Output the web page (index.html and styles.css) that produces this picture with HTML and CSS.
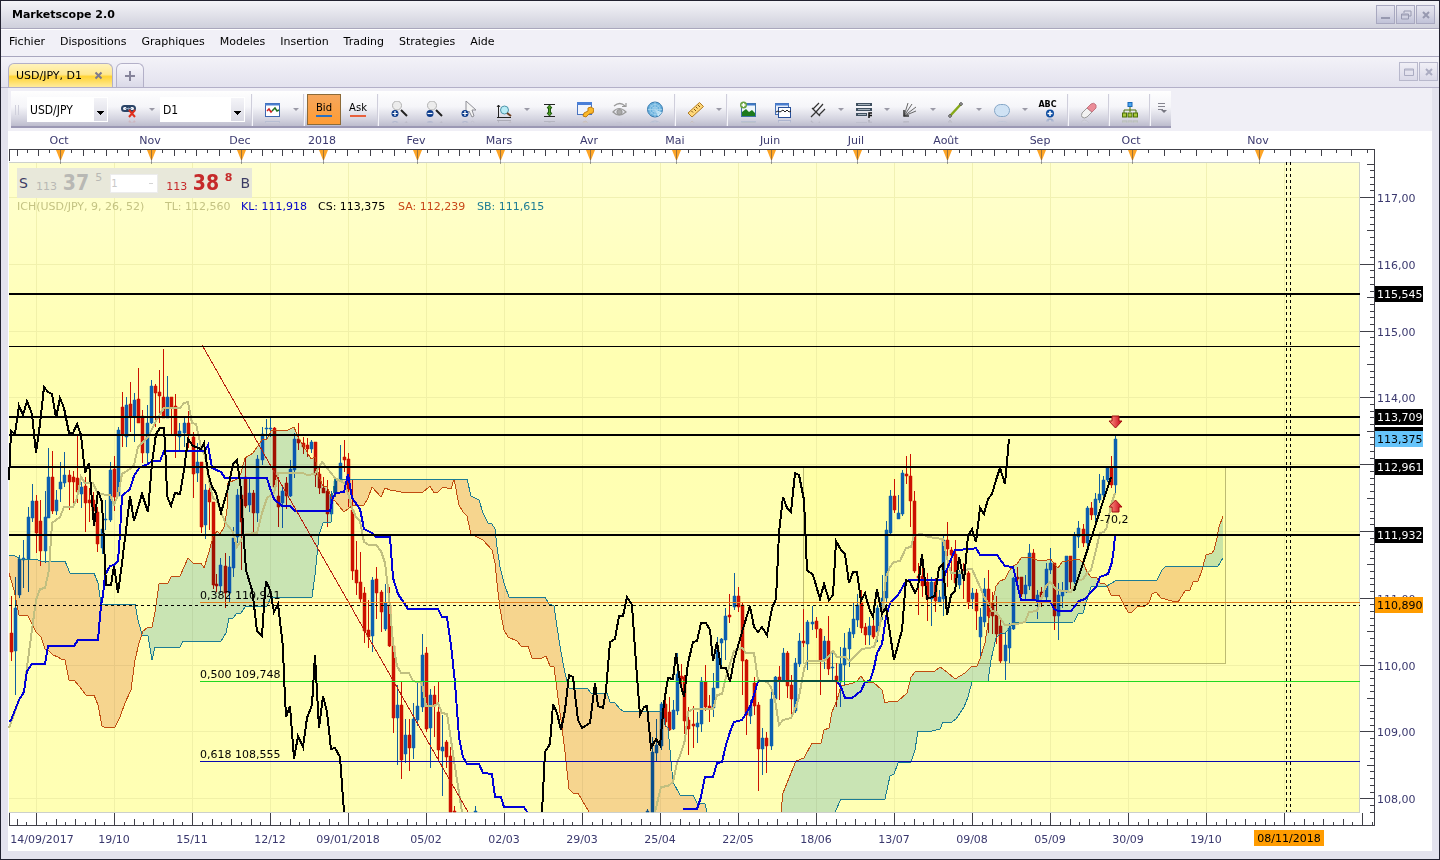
FILE: index.html
```html
<!DOCTYPE html>
<html lang="fr">
<head>
    <meta charset="UTF-8">
    <meta name="viewport" content="width=device-width, initial-scale=1.0">
    <title>Marketscope 2.0</title>
    <link rel="stylesheet" href="styles.css">
</head>
<body>
    <div class="window">
        <header class="titlebar">
            <h1>Marketscope 2.0</h1>
            <div class="window-buttons">
                <button aria-label="Minimize"><svg width="12" height="12"><path d="M1 9h9" stroke-width="2"/></svg></button>
                <button aria-label="Restore"><svg width="12" height="12"><path d="M4 4V2h7v5H9M1.500 5h7v5h-7zM1 6h8" /></svg></button>
                <button aria-label="Close"><svg width="12" height="12"><path d="M3 3l6 6M9 3l-6 6" stroke-width="2"/></svg></button>
            </div>
        </header>

        <nav class="menu">
            <button>Fichier</button>
            <button>Dispositions</button>
            <button>Graphiques</button>
            <button>Modeles</button>
            <button>Insertion</button>
            <button>Trading</button>
            <button>Strategies</button>
            <button>Aide</button>
        </nav>

        <div class="tabs">
            <button class="tab active">USD/JPY, D1 <svg width="9" height="9"><path d="M1.500 1.500l6 6M7.500 1.500l-6 6" stroke="#7d7a8c" stroke-width="2"/></svg></button>
            <button class="tab add" aria-label="New tab"><svg width="12" height="12"><path d="M6 1v10M1 6h10" stroke="#85839a" stroke-width="2"/></svg></button>
            <div class="window-buttons light">
                <button aria-label="Maximize"><svg width="12" height="12"><path d="M1.500 3h9v6.500h-9zM1 4h10"/></svg></button>
                <button aria-label="Close chart"><svg width="12" height="12"><path d="M3 3l6 6M9 3l-6 6" stroke-width="2"/></svg></button>
            </div>
        </div>

        <main class="workspace">
            <div class="toolbar-row">
                <div class="toolbar">
                    <span class="grip"></span>
                    <select class="symbol" aria-label="Symbol"><option>USD/JPY</option></select>
                    <button class="tool link" aria-label="Link">
                        <svg viewBox="0 0 18 18"><g fill="none" stroke="#2b4568" stroke-width="2"><rect x="2" y="5" width="8" height="5" rx="2.500"/><rect x="7" y="5" width="8" height="5" rx="2.500"/></g><path d="M5 7.500h7" stroke="#8fa4bf"/><path d="M9 9l6 7M15 9l-6 7" stroke="#e0301c" stroke-width="2"/></svg>
                    </button>
                    <button class="drop" aria-label="Link options"></button>
                    <select class="period" aria-label="Period"><option>D1</option></select>
                    <span class="sep"></span>
                    <button class="tool" aria-label="Chart type">
                        <svg viewBox="0 0 18 18"><rect x="1.500" y="2.500" width="14" height="13" fill="#fff" stroke="#3c66b0"/><path d="M1 3.500h15" stroke="#4a7fd0" stroke-width="2"/><path d="M3 10l2-2 2 3 1-1" fill="none" stroke="#d02020" stroke-width="1.500"/><path d="M8 10l3-3 2 3 2-1" fill="none" stroke="#207020" stroke-width="1.500"/></svg>
                    </button>
                    <button class="drop" aria-label="Chart types"></button>
                    <span class="sep"></span>
                    <button class="price bid">Bid</button>
                    <button class="price ask">Ask</button>
                    <span class="sep"></span>
                    <button class="tool" aria-label="Zoom in">
                        <svg viewBox="0 0 18 18"><circle cx="7" cy="4.500" r="4.500" fill="#ececec" stroke="#b0b0b0"/><path d="M11 9l6 6" stroke="#222" stroke-width="2"/><circle cx="5" cy="12.500" r="3.500" fill="#0d3c8c"/><path d="M5 10v5M2.500 12.500h5" stroke="#fff" stroke-width="1.200"/></svg>
                    </button>
                    <button class="tool" aria-label="Zoom out">
                        <svg viewBox="0 0 18 18"><circle cx="7" cy="4.500" r="4.500" fill="#ececec" stroke="#b0b0b0"/><path d="M11 9l6 6" stroke="#222" stroke-width="2"/><circle cx="5" cy="12.500" r="3.500" fill="#0d3c8c"/><path d="M2.500 12.500h5" stroke="#fff" stroke-width="1.200"/></svg>
                    </button>
                    <button class="tool" aria-label="Zoom pointer">
                        <svg viewBox="0 0 18 18"><path d="M6 0v13l3-3 3 6 2-1-2-6 4 0z" fill="#f4f4f4" stroke="#8e8e96"/><circle cx="5" cy="12.500" r="3.500" fill="#0d3c8c"/><path d="M5 10v5M2.500 12.500h5" stroke="#fff" stroke-width="1.200"/></svg>
                    </button>
                    <button class="tool" aria-label="Zoom area">
                        <svg viewBox="0 0 18 18"><path d="M3.500 4v12M2 16.500h14M2 6l1.500-2L5 6" fill="none" stroke="#222"/><circle cx="9.500" cy="9" r="4" fill="#b9ecf6" stroke="#4c93a8"/><path d="M12 12l4 3" stroke="#6e4020" stroke-width="2"/></svg>
                    </button>
                    <button class="drop" aria-label="Zoom options"></button>
                    <button class="tool" aria-label="Fit height">
                        <svg viewBox="0 0 18 18"><path d="M3 3.500h11M3 15.500h11" stroke="#222"/><path d="M8.500 4l2.500 3H9.500v5h1.500l-2.500 3L6 12h1.500V7H6z" fill="#4f9c20" stroke="#1c5a0c"/></svg>
                    </button>
                    <button class="tool" aria-label="Properties">
                        <svg viewBox="0 0 18 18"><rect x="1.500" y="1.500" width="14" height="12" fill="#f0f4fc" stroke="#4a74c0"/><path d="M1 2.500h15" stroke="#4a7fd8" stroke-width="3"/><path d="M7 15l1-3 4-2 0-3 3-1 3 2-1 4-4 1-3 3z" fill="#fbb829" stroke="#c07c10"/></svg>
                    </button>
                    <button class="tool" aria-label="View">
                        <svg viewBox="0 0 18 18" fill="none" stroke="#999" stroke-width="1.200"><path d="M2 11q6-7 13 0-7 6-13 0zM3 5q6-5 11 0M11 5.500h4V2"/><circle cx="8.500" cy="11" r="2.500" fill="#aaa"/></svg>
                    </button>
                    <button class="tool" aria-label="Globe">
                        <svg viewBox="0 0 18 18"><circle cx="9" cy="8.500" r="7.500" fill="#69b1de" stroke="#3578ad"/><path d="M9 8.500l7 3-4 4z" fill="#c9e8f8"/><g fill="none" stroke="#a9d4ee" stroke-width=".8"><circle cx="9" cy="8.500" r="5"/><circle cx="9" cy="8.500" r="2.500"/><path d="M9 1v15M2 8.500h14M4 3.500l10 10M14 3.500l-10 10"/></g></svg>
                    </button>
                    <span class="sep"></span>
                    <button class="tool" aria-label="Measure">
                        <svg viewBox="0 0 18 18"><path d="M1 12L12.500 1.500l4 4L5 16z" fill="#ffd87a" stroke="#b07a20"/><path d="M4.500 10l1.500 1.500M7 8l2 2M9 6l1.500 1.500M11 4l2 2" stroke="#7c5010"/></svg>
                    </button>
                    <button class="drop" aria-label="Measure options"></button>
                    <span class="sep"></span>
                    <button class="tool" aria-label="Add indicator">
                        <svg viewBox="0 0 18 18"><rect x="2.500" y="2.500" width="14" height="13" fill="#eef6fc" stroke="#3f72a6"/><path d="M3 3.500h13" stroke="#3f78c8" stroke-width="2"/><path d="M3 15v-4l4-3 3 3 3-2 3 3v3z" fill="#1c7a1c"/><circle cx="4.500" cy="4" r="3.500" fill="#69a342"/><path d="M4.500 2v4M2.500 4h4" stroke="#fff" stroke-width="1.500"/></svg>
                    </button>
                    <button class="tool" aria-label="Indicators">
                        <svg viewBox="0 0 18 18"><rect x="1.500" y="2.500" width="13" height="11" fill="#e8effb" stroke="#456fb4"/><path d="M1 3.500h14" stroke="#4a7fd0" stroke-width="2"/><rect x="4.500" y="6.500" width="12" height="10" fill="#fff" stroke="#28509a"/><path d="M2 11l2-1 2 1 3-2 2 2 2-2 2 2 2-1" fill="none" stroke="#222"/></svg>
                    </button>
                    <button class="tool" aria-label="Pitchfork">
                        <svg viewBox="0 0 18 18" fill="none" stroke="#333" stroke-width="1.200"><path d="M2 16l5-5M3 7l8 8M4 8l6-6M7 11l7-8M10 14l6-6"/></svg>
                    </button>
                    <button class="drop" aria-label="Pitchfork options"></button>
                    <button class="tool" aria-label="Fibonacci">
                        <svg viewBox="0 0 18 18"><path d="M1 3.500h16M1 8.500h16M1 13.500h11" stroke="#405060" stroke-width="3"/><path d="M3 3.500h12M3 8.500h12M3 13.500h8" stroke="#a4b0ba"/><path d="M14 17v-5h3M14 14.500h3" fill="none" stroke="#111" stroke-width="1.500"/></svg>
                    </button>
                    <button class="drop" aria-label="Fibonacci options"></button>
                    <button class="tool" aria-label="Fan">
                        <svg viewBox="0 0 18 18" fill="none" stroke="#666"><path d="M3 15L7 2M3 15l8-12M3 15L15 6M3 15l12-5"/><path d="M3 9v6h5" stroke="#333" stroke-width="1.500"/></svg>
                    </button>
                    <button class="drop" aria-label="Fan options"></button>
                    <button class="tool" aria-label="Line">
                        <svg viewBox="0 0 18 18"><path d="M3 15L14 3" stroke="#85a818" stroke-width="2.500"/><circle cx="3" cy="15" r="1.300" fill="#ddd" stroke="#444"/><circle cx="14" cy="3" r="1.300" fill="#ddd" stroke="#444"/></svg>
                    </button>
                    <button class="drop" aria-label="Line options"></button>
                    <button class="tool" aria-label="Shape">
                        <svg viewBox="0 0 18 18"><rect x="1.500" y="3.500" width="15" height="12" rx="6" fill="#cfe2f4" stroke="#85a6c6"/></svg>
                    </button>
                    <button class="drop" aria-label="Shape options"></button>
                    <button class="tool abc" aria-label="Text label"><span>ABC</span>
                        <svg viewBox="0 0 18 9"><circle cx="11" cy="4.500" r="4" fill="#0d4ca0"/><path d="M11 2v5M8.500 4.500h5" stroke="#fff" stroke-width="1.500"/></svg>
                    </button>
                    <span class="sep"></span>
                    <button class="tool" aria-label="Eraser">
                        <svg viewBox="0 0 18 18"><path d="M2 12l5-5 5 4-5 5q-3 2-5 0-1-1 0-4z" fill="#f2f2f2" stroke="#9a9a9a"/><path d="M7 7l4-4q3-2 5 1l0 3-4 4z" fill="#ec8c98" stroke="#c27480"/></svg>
                    </button>
                    <span class="sep"></span>
                    <button class="tool" aria-label="Tree">
                        <svg viewBox="0 0 18 18"><path d="M9 5v6M3 12V9h12v3" fill="none" stroke="#4c7008"/><rect x="7" y="1.500" width="4" height="4" fill="#4aa4f0" stroke="#1868b8"/><g fill="#a8c83c" stroke="#4c7008"><rect x="1.500" y="12" width="4" height="4"/><rect x="7" y="12" width="4" height="4"/><rect x="12.500" y="12" width="4" height="4"/></g></svg>
                    </button>
                    <span class="sep"></span>
                    <button class="overflow" aria-label="More tools"><svg width="10" height="12"><path d="M1 1.500h7M1 4.500h7M1 7.500h5" stroke="#85858f"/><path d="M4 8h6l-3 3z" fill="#777781"/></svg></button>
                </div>
            </div>

            <section class="chart">
                <svg id="chart" viewBox="8 131 1424 720" role="img" aria-label="USD/JPY D1"></svg>
                <div class="dealing">
                    <button class="side">S</button>
                    <span class="sell"><small>113</small><b>37</b><sup>5</sup></span>
                    <select aria-label="Amount"><option>1</option></select>
                    <span class="buy"><small>113</small><b>38</b><sup>8</sup></span>
                    <button class="side">B</button>
                </div>
            </section>
        </main>
    </div>

    <script src="chart.js"></script>
</body>
</html>
```

FILE: styles.css
```css
* {
    box-sizing: border-box;
}

body {
    margin: 0;
    height: 100vh;
    font-family: "DejaVu Sans", Verdana, sans-serif;
    font-size: 11px;
    color: #000;
}

button,
select {
    font: inherit;
    color: inherit;
    border: none;
    background: none;
    padding: 0;
    margin: 0;
}

.window {
    display: flex;
    flex-direction: column;
    height: 100%;
    border: 1px solid #222230;
    background: #e4e3ee;
}

.titlebar {
    display: flex;
    align-items: center;
    justify-content: space-between;
    height: 28px;
    padding: 0 4px 0 11px;
    background: linear-gradient(#f4f4f8, #e2e2ea 50%, #cfd0dc);
    border-bottom: 1px solid #a9a7bc;
}

.titlebar h1 {
    margin: 0;
    font-size: 11px;
    font-weight: bold;
}

.window-buttons {
    display: flex;
    gap: 1px;
}

.window-buttons button {
    width: 19px;
    height: 19px;
    border: 1px solid #a8a8c0;
    background: linear-gradient(#e6e6f0, #d6d6e4 50%, #c0c2d8);
    display: flex;
    align-items: center;
    justify-content: center;
}

.window-buttons svg {
    fill: none;
    stroke: #9799b0;
}

.window-buttons.light {
    margin-left: auto;
    margin-bottom: 6px;
}

.window-buttons.light button {
    background: linear-gradient(#f0eff6, #dad9e8);
    border-color: #b8b8cc;
}

.window-buttons.light svg {
    stroke: #abacc2;
}

.menu {
    display: flex;
    align-items: center;
    gap: 15px;
    height: 28px;
    padding: 0 8px 3px;
    background: #f1f0f7;
    border-top: 1px solid #fff;
    border-bottom: 1px solid #a9a7bf;
}

.tabs {
    display: flex;
    align-items: flex-end;
    gap: 3px;
    height: 31px;
    padding: 0 1px 0 7px;
    background: linear-gradient(#f3f2f8, #e3e2ee);
    border-bottom: 1px solid #b3b0c8;
}

.tab {
    display: flex;
    align-items: center;
    height: 24px;
    border: 1px solid #b3b0c8;
    border-bottom: none;
    border-radius: 6px 6px 0 0;
    background: linear-gradient(#f7f6fb, #dad9e8);
}

.tab.active {
    gap: 12px;
    padding: 0 9px 0 7px;
    background: linear-gradient(#fff3bc, #ffe88f 45%, #ffd334 55%, #ffeb9c);
}

.tab.add {
    width: 28px;
    justify-content: center;
}

.workspace {
    flex: 1;
    display: flex;
    flex-direction: column;
    min-height: 0;
    padding: 0 7px 8px;
}

.toolbar-row {
    height: 43px;
    padding: 3px;
    background: #f0eff6;
}

.toolbar {
    display: inline-flex;
    align-items: center;
    height: 37px;
    padding-top: 2px;
    background: linear-gradient(#fefefe, #f5f5f9 45%, #d4d4e0 80%, #bdbccd);
    border-bottom: 2px solid #9b98b4;
}

.grip {
    width: 16px;
    height: 10px;
    background: repeating-linear-gradient(90deg, #d0d0dc 0 1px, transparent 1px 3px) 4px 0 / 6px 10px no-repeat;
}

.toolbar select {
    appearance: none;
    height: 25px;
    padding: 0 3px;
    font-family: "DejaVu Sans Condensed", "DejaVu Sans", sans-serif;
    font-stretch: condensed;
    font-size: 12px;
    background:
        linear-gradient(#000, #000) right 4px top 14px / 7px 1px no-repeat,
        linear-gradient(#000, #000) right 5px top 15px / 5px 1px no-repeat,
        linear-gradient(#000, #000) right 6px top 16px / 3px 1px no-repeat,
        linear-gradient(#000, #000) right 7px top 17px / 1px 1px no-repeat,
        linear-gradient(#f4f4f8, #d9d9e3) right 1px top 1px / 13px 23px no-repeat,
        #fff;
}

.symbol {
    width: 81px;
    margin-right: 3px;
}

.period {
    width: 85px;
    margin: 0 4px 0 3px;
}

.tool {
    display: flex;
    align-items: center;
    justify-content: center;
    width: 35px;
    height: 32px;
}

.tool svg {
    width: 18px;
    height: 18px;
    -webkit-box-reflect: below 0 linear-gradient(transparent 75%, rgba(0, 0, 0, 0.3));
}

.tool.abc {
    flex-direction: column;
    font-size: 8px;
    font-weight: bold;
    line-height: 8px;
}

.tool.abc svg {
    height: 9px;
    -webkit-box-reflect: below 0 linear-gradient(transparent 50%, rgba(0, 0, 0, 0.4));
}

.drop {
    width: 11px;
    height: 32px;
    display: flex;
    align-items: center;
    justify-content: center;
}

.drop::before {
    content: "";
    border: 3px solid transparent;
    border-top-color: #9a99a6;
    border-bottom: none;
}

.sep {
    width: 1px;
    height: 32px;
    margin: 0 2px 0 3px;
    background: #f6f6fb;
    box-shadow: -1px 0 #cfcedb;
}

.price {
    width: 34px;
    height: 31px;
    font-size: 10px;
    line-height: 10px;
}

.price::after {
    content: "";
    display: block;
    width: 16px;
    height: 2px;
    margin: 2px auto 0;
    background: #e8603c;
}

.bid {
    border: 1px solid #8c6a38;
    background: linear-gradient(#f5a65c, #ff9c34);
}

.bid::after {
    background: #2a70c0;
}

.overflow {
    width: 18px;
    height: 32px;
}

.chart {
    position: relative;
    flex: 1;
    min-height: 0;
    background: #fff;
}

.chart > svg {
    display: block;
    width: 100%;
    height: 100%;
}

.chart text {
    font-size: 11px;
}

.axis-label {
    fill: #3a386e;
}

.middle {
    text-anchor: middle;
}

.axis {
    fill: none;
    stroke: #404048;
    shape-rendering: crispEdges;
}

.grid {
    fill: none;
    stroke: #e4e49a;
    stroke-opacity: 0.5;
    shape-rendering: crispEdges;
}

.cloud {
    mix-blend-mode: multiply;
}

.line {
    fill: none;
    shape-rendering: crispEdges;
}

/* quick dealing panel drawn over the chart */
.dealing {
    position: absolute;
    left: 9px;
    top: 37px;
    display: flex;
    align-items: center;
    gap: 8px;
    width: 235px;
    height: 30px;
    padding: 0 2px;
    background: #e8e8da;
    color: #b8b8b4;
}

.dealing .side {
    font-size: 14px;
    color: #3c3c64;
}

.sell,
.buy {
    display: flex;
    flex: 1;
    justify-content: space-between;
    align-items: baseline;
    padding-top: 3px;
    line-height: 24px;
}

.dealing small {
    font-size: 11px;
}

.dealing b {
    font-family: "DejaVu Sans Condensed", "DejaVu Sans", sans-serif;
    font-stretch: condensed;
    font-size: 21px;
}

.dealing sup {
    font-size: 11px;
    line-height: 14px;
    align-self: flex-start;
}

.buy {
    color: #c62a2a;
}

.buy sup {
    font-weight: bold;
}

.dealing select {
    appearance: none;
    width: 48px;
    height: 19px;
    font-size: 10px;
    color: #c8c8c8;
    background: linear-gradient(#d4d4d4, #d4d4d4) right 4px center / 4px 1px no-repeat, #fff;
    border: 1px solid #ececec;
}
```

FILE: chart.js
```js
var svg = document.getElementById('chart');
var NS = 'http://www.w3.org/2000/svg';

var LEFT = 9, TOP = 162, RIGHT = 1360, BOTTOM = 812;

// x, high, low, body top, body bottom, 1 = up / 0 = down
var candles = [
    [11,596,661,633,652,0],[15,577,695,608,651,1],[19,555,598,559,595,1],[23,540,588,558,560,1],[28,507,592,517,559,1],
    [32,484,522,501,518,1],[36,495,553,501,533,0],[40,500,566,521,551,0],[45,491,563,517,551,1],[48,448,518,477,518,1],
    [52,451,514,477,511,0],[56,490,515,500,511,1],[60,462,502,482,489,1],[64,452,487,475,483,1],[69,470,510,475,482,0],
    [73,471,503,477,482,0],[77,436,503,478,492,0],[81,482,508,487,494,1],[85,477,532,486,503,0],[89,488,522,500,503,0],
    [93,492,520,500,511,0],[97,507,552,512,544,0],[102,517,554,529,548,1],[105,500,530,519,520,1],[110,462,522,470,520,1],
    [114,456,511,469,497,0],[118,427,496,430,496,1],[122,392,447,407,434,0],[126,397,447,405,437,1],[130,382,432,404,416,0],
    [134,393,442,400,416,1],[138,368,423,399,423,0],[142,410,463,416,453,0],[147,405,465,423,453,1],[151,380,424,386,423,1],
    [155,384,427,386,393,0],[159,370,423,392,396,0],[163,349,418,397,418,0],[167,376,418,397,418,1],[171,397,435,397,408,0],
    [175,394,458,406,434,0],[179,423,450,431,437,1],[184,418,447,423,433,1],[188,411,448,423,434,0],[193,432,498,437,474,0],
    [197,443,482,462,473,1],[201,462,533,462,527,0],[205,484,539,490,525,1],[209,483,530,490,502,0],[213,502,589,502,585,0],
    [216,574,592,584,586,0],[220,558,593,565,586,1],[225,553,608,566,593,0],[229,556,602,567,593,1],[233,527,577,538,568,1],
    [237,489,543,495,537,1],[241,493,570,495,522,0],[245,457,508,477,506,0],[249,478,512,493,505,1],[253,490,532,493,513,0],
    [257,455,522,459,513,1],[262,427,465,434,460,1],[266,419,440,428,429,1],[270,416,437,428,429,1],[274,427,487,428,487,0],
    [278,477,527,496,507,0],[282,487,528,491,503,1],[286,477,509,483,496,0],[290,460,497,469,496,1],[294,433,478,439,470,1],
    [298,423,450,439,443,0],[303,437,454,443,447,0],[307,438,457,445,449,0],[311,440,453,442,449,1],[315,442,487,442,475,0],
    [319,467,494,474,488,0],[323,477,492,488,493,0],[327,480,527,491,514,0],[331,491,522,495,514,1],[335,477,497,481,493,1],
    [340,445,482,463,481,1],[344,440,472,457,460,0],[348,453,507,459,490,0],[352,480,580,510,571,0],[356,541,595,570,583,0],
    [360,552,602,582,599,0],[364,587,643,593,631,0],[368,600,648,630,637,0],[372,577,652,580,636,1],[376,567,619,579,593,0],
    [381,590,632,592,612,0],[385,584,631,603,629,1],[389,587,647,605,646,0],[393,645,733,646,718,0],[397,685,765,705,718,1],
    [401,682,779,705,760,0],[405,719,763,735,754,1],[409,719,771,735,748,0],[413,703,759,719,748,1],[417,683,726,706,720,1],
    [422,634,712,655,707,1],[426,647,732,653,729,0],[430,689,768,695,728,1],[434,686,737,695,706,0],[438,681,762,712,750,0],
    [442,715,796,747,751,1],[446,740,768,742,757,0],[450,747,812,756,812,0],[454,806,812,811,812,0],[475,806,812,811,812,1],
    [647,809,812,811,812,1],[652,737,812,752,812,1],[656,719,762,745,753,1],[661,702,750,704,746,1],[665,700,727,704,722,0],
    [669,697,731,712,730,0],[673,700,730,710,729,1],[677,653,715,674,711,1],[681,664,690,676,679,0],[684,675,734,677,721,0],
    [688,707,755,720,729,0],[693,706,748,724,726,0],[697,712,743,723,727,1],[701,677,732,681,724,1],[705,665,711,682,707,0],
    [709,695,722,706,708,0],[713,673,717,688,708,1],[717,637,688,650,688,1],[721,638,668,639,643,1],[725,608,660,616,640,1],
    [729,594,623,615,617,0],[734,573,610,596,607,1],[738,587,612,596,607,0],[742,603,695,605,661,0],[746,659,735,660,715,0],
    [750,700,724,706,716,1],[754,677,715,683,706,0],[758,702,791,705,749,0],[762,728,775,738,749,1],[766,732,773,738,746,0],
    [771,690,750,699,746,1],[775,676,707,677,699,1],[779,666,700,677,680,0],[783,648,680,653,680,1],[787,651,698,653,686,0],
    [791,675,717,685,699,0],[795,658,713,663,711,1],[799,633,667,641,664,1],[803,609,647,641,643,0],[807,620,670,622,644,1],
    [812,606,630,622,624,1],[816,617,638,621,629,0],[820,628,695,629,660,0],[824,636,669,641,659,1],[828,616,675,641,669,0],
    [832,653,680,667,668,1],[836,663,707,676,682,0],[840,647,707,664,682,1],[844,633,685,648,665,1],[849,628,667,632,649,1],
    [853,603,638,619,634,1],[857,594,627,605,620,1],[861,590,633,602,628,0],[865,623,645,627,635,0],[869,617,645,626,635,1],
    [873,610,639,626,637,0],[877,605,642,608,632,1],[882,575,620,598,609,1],[886,521,602,530,598,1],[890,490,535,496,533,1],
    [894,479,513,496,510,0],[898,495,519,513,519,1],[902,470,516,473,514,1],[906,456,484,474,476,0],[910,454,527,476,501,0],
    [914,491,573,501,571,0],[918,563,615,576,578,0],[922,563,597,576,586,0],[927,573,621,582,599,0],[931,577,626,582,599,1],
    [935,578,612,582,601,0],[939,590,603,597,602,1],[943,535,616,540,599,1],[947,522,587,540,549,0],[951,547,580,550,555,0],
    [955,540,592,554,583,0],[959,570,589,572,585,1],[963,563,599,570,573,0],[968,571,609,573,603,0],[972,588,609,593,599,1],
    [976,589,630,593,611,0],[980,608,656,617,637,1],[984,578,627,589,622,1],[988,570,633,589,616,0],[992,592,634,603,616,0],
    [996,596,644,615,634,0],[1000,620,663,626,661,0],[1005,632,680,645,661,1],[1009,623,663,628,648,1],[1013,577,630,578,629,1],
    [1017,567,590,577,579,0],[1021,577,597,577,594,0],[1025,575,600,585,594,1],[1029,544,590,553,586,1],[1033,549,601,553,600,0],
    [1037,590,619,595,600,1],[1041,587,607,592,597,0],[1046,563,601,569,597,1],[1050,548,574,563,570,1],[1054,563,630,563,616,0],
    [1058,583,640,595,616,1],[1062,582,608,592,596,1],[1066,556,593,556,592,1],[1070,556,589,556,582,0],[1074,532,584,535,582,1],
    [1078,521,548,528,537,1],[1083,524,547,529,543,0],[1087,506,547,508,543,1],[1091,502,520,508,515,0],[1095,493,523,499,515,1],
    [1099,474,503,494,500,1],[1103,476,503,480,495,1],[1107,467,482,468,480,1],[1111,456,488,467,485,0],[1115,436,493,439,485,1]
];

var chikou = [
    '9,480 11,431 15,434 19,406 23,415 27,401 32,414 36,453 40,424 44,387 48,392 52,394 56,418 60,398 64,408 69,433 73,433 77,424 81,435 85,473 89,463 94,526 98,491 102,502 106,585 111,585 114,566 118,593 122,563 126,530 130,496 134,521 142,494 148,512 152,463 156,434 160,428 164,428 166,464 167,496 171,506 175,493 180,494 184,470 188,439 193,446 201,449 204,443 208,473 212,487 216,493 221,513 228,488 233,464 237,460 241,490 243,527 246,570 252,590 254,605 257,631 262,636 264,605 266,581 270,590 274,612 278,604 283,647 284,677 286,717 290,706 294,759 298,736 303,747 307,718 312,705 315,655 319,728 323,696 327,712 331,749 335,748 340,757 344,812',
    '542,812 545,752 550,744 553,704 557,713 561,730 565,710 569,675 573,677 578,720 582,728 590,723 595,683 598,706 603,708 606,690 610,642 615,639 619,616 623,616 627,597 632,605 636,663 640,715 644,707 647,706 651,748 656,739 660,745 664,703 668,678 673,679 676,653 680,682 684,697 688,663 693,642 697,641 701,623 706,623 710,630 713,661 717,642 721,668 726,668 730,682 734,660 742,632 750,606 754,627 758,632 762,627 767,635 772,608 776,599 779,533 783,497 787,508 791,512 795,473 799,475 804,500 807,570 813,575 820,599 824,584 829,600 833,595 836,541 841,550 845,554 849,583 853,572 857,572 861,601 865,593 869,608 873,617 877,589 882,614 886,607 894,660 902,630 906,580 910,582 915,593 918,587 922,554 927,599 935,596 939,568 943,564 947,615 951,595 955,591 959,557 964,581 968,536 972,529 976,542 980,508 984,514 988,499 992,494 996,480 1000,468 1005,484 1009,439',
    '1074,591 1111,477'
];

var kijun = [
    '9,722 11,720 19,700 24,692 27,671 32,664 45,664 48,646 74,646 78,640 98,640 101,605 103,595 105,575 110,566 114,565 118,561 120,533 122,496 130,489 134,476 139,468 148,464 152,461 160,461 164,451 205,451 208,445 212,468 221,472 225,478 267,478 270,488 274,499 282,506 290,506 295,511 330,511 333,497 336,493 344,492 348,474 352,498 360,509 364,529 372,533 376,537 390,537 393,578 398,594 408,609 438,609 442,617 447,617 451,645 455,683 459,737 463,757 467,764 479,764 483,773 492,774 495,797 501,797 504,807 524,807 527,812',
    '683,809 697,809 701,797 705,777 713,777 717,763 722,762 726,745 730,732 734,722 742,720 750,707 754,695 758,681',
    '837,681 841,687 845,698 852,698 861,691 865,682 870,681 874,668 877,653 882,644 886,617 890,603 898,595 906,581 911,580 943,580 947,569 955,550 972,549 976,548 980,555 997,555 1005,566 1013,567 1021,600 1050,601 1054,609 1058,611 1071,611 1079,601 1085,599 1091,592 1096,587 1100,577 1108,574 1112,562 1114,547 1115,536'
];

var tenkan = [
    '9,728 12,720 19,700 24,692 27,667 36,600 40,589 45,588 49,570 52,523 56,520 60,517 64,507 73,507 77,498 81,477 85,483 93,483 98,494 110,495 114,505 118,495 122,474 130,469 134,465 138,447 148,437 156,421 160,414 164,408 180,408 184,403 188,402 192,423 196,424 201,447 205,456 210,486 213,498 217,501 221,512 225,522 233,532 237,547 242,539 246,534 257,533 262,513 267,498 274,493 278,473 303,473 307,475 315,474 322,462 327,468 335,478 344,483 348,493 352,508 356,517 360,521 364,542 369,545 376,545 381,551 385,563 389,597 393,643 397,666 401,673 409,673 413,681 422,683 426,706 434,706 438,703 442,713 447,714 451,740 455,767 462,812',
    '655,812 661,787 668,786 673,782 677,763 681,753 685,740 688,712 693,709 713,709 717,695 722,694 726,677 734,651 742,648 746,653 754,653 758,680 767,682 771,687 775,700 779,725 783,720 791,718 795,709 799,697 804,669 807,661 824,661 828,657 833,651 837,657 845,657 850,661 862,649 874,647 877,638 882,615 886,577 890,567 894,562 900,561 906,548 911,547 914,535 922,534 928,537 943,539 947,558 951,573 963,573 968,569 972,569 980,587 984,597 988,603 992,611 996,612 1000,618 1005,625 1017,624 1025,622 1029,612 1037,611 1046,586 1050,582 1057,590 1071,592 1078,581 1083,579 1087,573 1091,570 1096,550 1100,533 1104,532 1107,527 1111,505 1115,493'
];

// each cloud segment: span A, span B, fill
var GREEN = '#c9e4ff', ORANGE = '#f6d5cb';
var clouds = [
    ['9,573 14,590 19,615 28,616 36,632 41,637 45,649 49,651 53,655 58,657 61,659 65,660 69,680 74,680 80,687 86,695 94,695 98,705 102,726 104,727 115,727 120,717 125,703 131,690 135,660 139,643 142,634',
     '9,555 15,556 22,560 35,559 41,561 65,561 70,573 94,573 98,583 101,604 135,604 138,620 142,634', ORANGE],
    ['142,634 142,632 148,627 152,627 155,612 157,598 159,584 168,583 171,577 180,576 188,558 193,563 201,563 204,568 209,552 213,537 217,531 220,534 224,527 227,510 228,483 237,479 241,473 245,458 253,453 262,440 267,439 271,431 288,430 294,427 298,437 307,452 311,459 315,457 319,477 323,486 327,486 331,497 332,500',
     '142,635 148,636 152,660 155,647 180,647 183,641 221,641 226,633 229,618 233,618 237,613 241,613 245,607 267,606 271,597 312,597 315,575 319,535 323,523 331,522 332,500', GREEN],
    ['332,500 335,501 344,512 352,506 364,505 368,498 372,487 381,497 385,488 390,490 401,492 422,493 430,486 434,493 438,492 443,487 451,489 454,479 459,505 463,512 467,516 471,534 483,540 492,550 495,563 497,583 500,609 504,630 508,637 517,641 521,646 528,646 532,658 542,658 546,656 550,666 554,667 557,690 561,720 565,752 569,789 573,793 578,793 589,812',
     '332,500 335,479 467,479 471,496 479,500 483,513 488,523 492,524 495,529 497,547 500,567 504,583 509,597 545,597 549,604 554,606 557,627 561,652 565,673 569,688 587,688 591,693 607,693 610,702 615,703 620,709 623,711 663,711 665,725 668,728 670,750 673,782 680,795 693,795 697,803 705,804 707,812', ORANGE],
    ['781,812 783,793 791,773 796,761 804,758 812,743 821,743 824,730 829,728 832,712 837,700 841,686 853,683 857,681 861,676 865,682 873,682 882,690 885,703 891,701 898,701 907,693 911,677 915,672 935,671 940,667 947,672 955,679 965,673 972,666 977,666 980,659 985,643 988,623 991,607 993,600 996,586 1000,581 1005,579 1009,571 1013,566 1017,564 1021,558 1029,557 1037,560 1047,560 1051,559 1054,564 1058,568 1062,562 1078,559 1083,562 1087,572 1091,577 1097,578 1100,583 1104,583 1107,586',
     '835,812 841,799 885,799 890,776 894,774 898,763 911,762 915,750 918,731 932,731 940,729 943,722 952,722 956,719 964,707 968,697 972,682 988,681 991,660 996,638 1000,634 1005,633 1010,628 1013,623 1074,622 1078,614 1083,613 1091,587 1107,586', GREEN],
    ['1107,586 1111,595 1119,595 1123,603 1128,612 1132,612 1137,607 1145,606 1149,603 1152,594 1156,592 1161,598 1172,601 1178,602 1185,591 1190,590 1193,582 1198,581 1202,570 1203,566',
     '1107,586 1115,581 1157,580 1162,570 1166,566 1203,566', ORANGE],
    ['1203,566 1206,555 1212,553 1214,550 1217,538 1219,527 1223,516',
     '1203,566 1218,566 1223,558', GREEN]
];

function el(name, attrs, text) {
    var node = document.createElementNS(NS, name);
    for (var key in attrs) {
        node.setAttribute(key, attrs[key]);
    }
    if (text) {
        node.textContent = text;
    }
    svg.appendChild(node);
    return node;
}

function polyline(points, color, width) {
    el('polyline', { points: points, class: 'line', stroke: color, 'stroke-width': width });
}

function hline(x1, y, color, width, dash) {
    el('path', { d: 'M' + x1 + ' ' + y + 'H' + RIGHT, class: 'line', stroke: color, 'stroke-width': width, 'stroke-dasharray': dash || 'none' });
}

function drawBackground() {
    var defs = el('defs', {});
    defs.innerHTML = '<linearGradient id="bg" x2="0" y2="1"><stop offset="0" stop-color="#ffffcf"/>' +
        '<stop offset=".3" stop-color="#ffffb2"/><stop offset="1" stop-color="#ffffb4"/></linearGradient>' +
        '<linearGradient id="arrow"><stop offset="0" stop-color="#ff9c84"/><stop offset="1" stop-color="#c80018"/></linearGradient>';
    el('rect', { x: LEFT, y: TOP, width: RIGHT - LEFT, height: BOTTOM - TOP, fill: 'url(#bg)' });
    var d = '';
    for (var i = 0; i < 17; i++) {
        d += 'M' + (Math.round(36 + i * 78) + 0.5) + ' ' + TOP + 'V' + BOTTOM;
    }
    for (i = 0; i < 10; i++) {
        d += 'M' + LEFT + ' ' + (Math.round(197 + i * 66.8) + 0.5) + 'H' + RIGHT;
    }
    el('path', { d: d, class: 'grid' });
    el('path', { d: 'M9 162.5H1359.5V812.5H9', class: 'line', stroke: '#ccd0cc', 'stroke-width': 1 });
}

function drawTimeAxis() {
    var names = ['Oct', 'Nov', 'Dec', '2018', 'Fev', 'Mars', 'Avr', 'Mai', 'Juin', 'Juil', 'Août', 'Sep', 'Oct', 'Nov'];
    var xs = [60, 151, 241, 323, 417, 500, 590, 676, 771, 857, 947, 1041, 1132, 1259];
    var edges = [-27].concat(xs, [1382]);
    var d = 'M9.500 161V149.500H1374.500V825.500H9.500V813';
    for (var i = 0; i < edges.length - 1; i++) {
        for (var j = 1; j < 8; j++) {
            var x = Math.round(edges[i] + (edges[i + 1] - edges[i]) * j / 8) + 0.5;
            if (x > 10 && x < 1372) {
                d += 'M' + x + ' 150v' + (j % 2 ? 3 : 6);
            }
        }
    }
    // bottom scale, one major tick for 20 bars
    for (i = -2; i < 138; i++) {
        x = Math.round(36 + i * 9.75) + 0.5;
        if (x < 1374) {
            d += 'M' + x + ' 825v-' + (i % 8 === 0 ? 12 : i % 2 ? 3 : 6);
        }
    }
    el('path', { d: d, class: 'axis' });

    for (i = 0; i < xs.length; i++) {
        el('path', { d: 'M' + (xs[i] - 4) + ' 150h9l-4 10h-1z', fill: '#fda426' });
        el('path', { d: 'M' + (xs[i] + 0.5) + ' 150v14', class: 'axis', 'stroke-opacity': 0.5 });
        el('text', { x: xs[i] - 1, y: 144, class: 'axis-label middle' }, names[i]);
    }

    var dates = ['14/09/2017', '19/10', '15/11', '12/12', '09/01/2018', '05/02', '02/03', '29/03', '25/04', '22/05', '18/06', '13/07', '09/08', '05/09', '30/09', '19/10'];
    for (i = 0; i < dates.length; i++) {
        el('text', { x: i === 0 ? 42 : 36 + i * 78, y: 843, class: 'axis-label middle' }, dates[i]);
    }
    el('rect', { x: 1254, y: 830, width: 70, height: 16, fill: '#ff9c00' });
    el('text', { x: 1289, y: 842, class: 'middle' }, '08/11/2018');
}

function drawPriceAxis() {
    var d = '';
    for (var i = -5; i < 93; i++) {
        var y = Math.round(197 + i * 6.68) + 0.5;
        d += 'M1374 ' + y + 'h-' + (i % 10 === 0 ? 14 : i % 5 === 0 ? 7 : 4);
    }
    el('path', { d: d, class: 'axis' });
    // 113,00 and 112,00 are taken by the level marks
    [117, 116, 115, 114, 111, 110, 109, 108].forEach(function (price) {
        el('text', { x: 1377, y: Math.round(202 + (117 - price) * 66.8), class: 'axis-label' }, price + ',00');
    });
    var marks = [
        [286, '115,545', '#000', '#fff'],
        [409, '113,709', '#000', '#fff'],
        [427, '', '#000', '#fff'],
        [431, '113,375', '#66c4fa', '#000'],
        [459, '112,961', '#000', '#fff'],
        [527, '111,932', '#000', '#fff'],
        [597, '110,890', '#ff9c00', '#000']
    ];
    marks.forEach(function (m) {
        el('rect', { x: 1375, y: m[0], width: 48, height: 16, fill: m[2] });
        if (m[1]) {
            el('text', { x: 1377, y: m[0] + 12, fill: m[3] }, m[1]);
        }
    });
}

function drawCandles() {
    var wicks = ['', ''], bodies = ['', ''];
    candles.forEach(function (c) {
        wicks[c[5]] += 'M' + c[0] + ' ' + c[1] + 'h1V' + c[2] + 'h-1z';
        bodies[c[5]] += 'M' + (c[0] - 1) + ' ' + c[3] + 'h3V' + Math.max(c[4], c[3] + 1) + 'h-3z';
    });
    el('path', { d: wicks[0], fill: '#cc1100', 'shape-rendering': 'crispEdges' });
    el('path', { d: wicks[1], fill: '#1060a0', 'shape-rendering': 'crispEdges' });
    el('path', { d: bodies[0], fill: '#cc1100', stroke: '#cc1100', 'stroke-width': 0.5 });
    el('path', { d: bodies[1], fill: '#0c60b0', stroke: '#0c60b0', 'stroke-width': 0.5 });
}

function drawChart() {
    drawBackground();
    el('rect', { x: 803.5, y: 467.5, width: 422, height: 196, fill: '#ffff90', 'fill-opacity': 0.35, stroke: '#bdbb72', 'shape-rendering': 'crispEdges' });
    drawCandles();
    clouds.forEach(function (c) {
        el('polygon', { points: c[0] + ' ' + c[1].split(' ').reverse().join(' '), fill: c[2], class: 'cloud' });
        polyline(c[0], '#c04c10', 1);
        polyline(c[1], '#1c7c94', 1);
    });
    tenkan.forEach(function (p) { polyline(p, '#c0bf80', 2); });
    kijun.forEach(function (p) { polyline(p, '#0000d8', 2); });

    polyline('202,345 468,812', '#b82010', 1);
    hline(200, 602.5, '#e08020', 1);
    hline(200, 681.5, '#20d820', 1);
    hline(200, 761.5, '#0808b0', 1);
    polyline('758,681 837,681', '#085040', 2);
    hline(LEFT, 346.5, '#000', 1);
    [294, 417, 435, 467, 535].forEach(function (y) { hline(LEFT, y, '#000', 2); });
    hline(LEFT, 605.5, '#000', 1, '3 3');
    chikou.forEach(function (p) { polyline(p, '#000', 2); });
    el('path', { d: 'M1286.500 162V812M1290.500 162V812', class: 'line', stroke: '#000', 'stroke-dasharray': '3 3' });

    el('text', { x: 200, y: 599 }, '0,382 110,941');
    el('text', { x: 200, y: 678 }, '0,500 109,748');
    el('text', { x: 200, y: 758 }, '0,618 108,555');
    el('path', { d: 'M1112 416h7v5h3l-6.500 7-6.500-7h3z', fill: 'url(#arrow)', stroke: '#a01010' });
    el('path', { d: 'M1112 512h7v-5h3l-6.500-7-6.500 7h3z', fill: 'url(#arrow)', stroke: '#a01010' });
    el('text', { x: 1100, y: 523 }, '-70,2');

    var legend = [
        [17, 'ICH(USD/JPY, 9, 26, 52)', '#c4c383'],
        [165, 'TL: 112,560', '#c4c383'],
        [241, 'KL: 111,918', '#0000c8'],
        [318, 'CS: 113,375', '#000'],
        [398, 'SA: 112,239', '#c84818'],
        [477, 'SB: 111,615', '#1c7c94']
    ];
    legend.forEach(function (l) {
        el('text', { x: l[0], y: 210, fill: l[2] }, l[1]);
    });
    drawTimeAxis();
    drawPriceAxis();
}

drawChart();
```
